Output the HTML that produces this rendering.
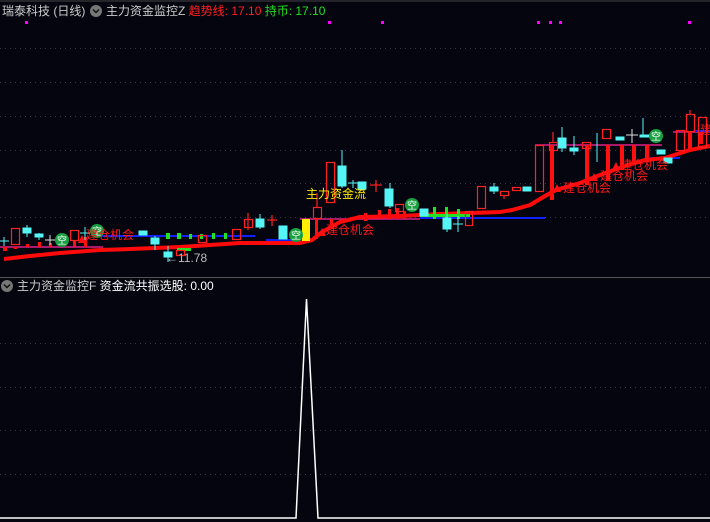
<!DOCTYPE html>
<html><head><meta charset="utf-8"><style>
html,body{margin:0;padding:0;background:#05050f;}
body{width:710px;height:522px;overflow:hidden;position:relative;font-family:"Liberation Sans","Noto Sans CJK SC",sans-serif;}
.t{position:absolute;font-size:12px;white-space:nowrap;line-height:14px;}
</style></head><body>
<svg width="710" height="522" style="position:absolute;left:0;top:0" xmlns="http://www.w3.org/2000/svg">
<g stroke="#3a3a44" stroke-dasharray="1,4" stroke-width="1">
<line x1="0" y1="48.5" x2="710" y2="48.5"/><line x1="0" y1="82.5" x2="710" y2="82.5"/>
<line x1="0" y1="116.5" x2="710" y2="116.5"/><line x1="0" y1="150.5" x2="710" y2="150.5"/>
<line x1="0" y1="183.5" x2="710" y2="183.5"/><line x1="0" y1="217.5" x2="710" y2="217.5"/>
<line x1="0" y1="343.5" x2="710" y2="343.5"/><line x1="0" y1="387.5" x2="710" y2="387.5"/>
<line x1="0" y1="430.5" x2="710" y2="430.5"/><line x1="0" y1="474.5" x2="710" y2="474.5"/>
</g>
<line x1="0" y1="277.5" x2="710" y2="277.5" stroke="#555"/>
<line x1="0" y1="1" x2="710" y2="1" stroke="#444"/>
<g fill="#ff00ff"><rect x="25" y="21" width="3" height="3"/><rect x="328" y="21" width="3" height="3"/><rect x="381" y="21" width="3" height="3"/><rect x="537" y="21" width="3" height="3"/><rect x="549" y="21" width="3" height="3"/><rect x="559" y="21" width="3" height="3"/><rect x="688" y="21" width="3" height="3"/></g>
<g stroke="#e0208a" stroke-width="1.5"><line x1="0" y1="247" x2="103" y2="247"/><line x1="300" y1="219" x2="420" y2="219"/><line x1="406" y1="216" x2="430" y2="216"/><line x1="535" y1="145" x2="662" y2="145"/><line x1="673" y1="132" x2="710" y2="132"/></g>
<g stroke="#1020ff" stroke-width="2"><line x1="101" y1="236" x2="255" y2="236"/><line x1="266" y1="240" x2="312" y2="240"/><line x1="420" y1="218" x2="545" y2="218"/><line x1="650" y1="158" x2="680" y2="158"/><line x1="695" y1="131" x2="710" y2="131"/></g>
<g fill="#ff1010"><rect x="3" y="247" width="4" height="4"/><rect x="14" y="247" width="3" height="2"/><rect x="26" y="244" width="3" height="3"/><rect x="38" y="242" width="3" height="5"/><rect x="49" y="243" width="3" height="4"/><rect x="73" y="240" width="3" height="7"/><rect x="84" y="237" width="3" height="10"/>
<rect x="315" y="219" width="3" height="20"/><rect x="330" y="219" width="3" height="6"/><rect x="364" y="213" width="3" height="8"/><rect x="378" y="210" width="3" height="9"/><rect x="388" y="209" width="3" height="10"/><rect x="396" y="208" width="3" height="11"/><rect x="403" y="211" width="3" height="8"/>
<rect x="550" y="145" width="4" height="55"/><rect x="585" y="145" width="4" height="40"/><rect x="606" y="145" width="4" height="35"/><rect x="620" y="145" width="4" height="25"/><rect x="632" y="145" width="4" height="20"/><rect x="645" y="145" width="4" height="15"/><rect x="688" y="132" width="4" height="18"/><rect x="699" y="132" width="4" height="12"/></g>
<polyline fill="none" stroke="#ff0a0a" stroke-width="4" points="4,259 30,256 60,253 100,250 130,249 180,247 240,243 300,243 312,240 322,232 340,222 360,217 400,216 440,214 470,213 500,212 512,210 530,205 545,196 556,190 580,183 600,175 625,166 645,160 665,158 690,150 710,146"/>
<g fill="#22e022"><rect x="166" y="233" width="4" height="6"/><rect x="177" y="233" width="4" height="6"/><rect x="189" y="234" width="3" height="5"/><rect x="200" y="234" width="3" height="5"/><rect x="212" y="233" width="3" height="6"/><rect x="224" y="233" width="3" height="6"/><rect x="177" y="248" width="14" height="3"/>
<rect x="433" y="207" width="3" height="12"/><rect x="445" y="207" width="3" height="12"/><rect x="457" y="209" width="3" height="10"/><rect x="420" y="214" width="50" height="3"/></g>
<g stroke="#55f5f5" fill="#55f5f5"><line x1="4" y1="237" x2="4" y2="246"/><line x1="0" y1="241" x2="9" y2="241"/>
<line x1="27" y1="225" x2="27" y2="237"/><rect x="23" y="228" width="8" height="5"/><rect x="35" y="234" width="8" height="3"/><line x1="39" y1="233" x2="39" y2="240"/>
<line x1="85" y1="227" x2="85" y2="240"/><line x1="80" y1="233" x2="90" y2="233"/>
<rect x="139" y="231" width="8" height="4"/><rect x="151" y="238" width="8" height="6"/><line x1="155" y1="236" x2="155" y2="250"/><rect x="164" y="252" width="8" height="5"/><line x1="168" y1="246" x2="168" y2="262"/>
<rect x="256" y="219" width="8" height="8"/><line x1="260" y1="214" x2="260" y2="229"/><rect x="279" y="226" width="8" height="13"/>
<line x1="342" y1="150" x2="342" y2="188"/><rect x="338" y="166" width="8" height="20"/><line x1="348" y1="183" x2="358" y2="183"/><line x1="353" y1="180" x2="353" y2="188"/><rect x="358" y="182" width="8" height="7"/><line x1="390" y1="183" x2="390" y2="208"/><rect x="385" y="189" width="8" height="17"/>
<rect x="420" y="209" width="8" height="7"/><rect x="443" y="218" width="8" height="11"/><line x1="447" y1="214" x2="447" y2="232"/><line x1="458" y1="216" x2="458" y2="232"/><line x1="453" y1="224" x2="463" y2="224"/>
<rect x="490" y="187" width="8" height="4"/><line x1="494" y1="183" x2="494" y2="194"/><rect x="523" y="187" width="8" height="4"/>
<line x1="562" y1="127" x2="562" y2="152"/><rect x="558" y="138" width="8" height="10"/><rect x="570" y="148" width="8" height="3"/><line x1="574" y1="136" x2="574" y2="155"/><line x1="597" y1="133" x2="597" y2="162"/>
<rect x="616" y="137" width="8" height="3"/><line x1="643" y1="118" x2="643" y2="137"/><rect x="640" y="135" width="9" height="2"/><rect x="657" y="150" width="8" height="4"/><rect x="664" y="158" width="8" height="5"/></g>
<g stroke="#ddd"><line x1="50" y1="235" x2="50" y2="245"/><line x1="45" y1="240" x2="55" y2="240"/><line x1="632" y1="129" x2="632" y2="143"/><line x1="626" y1="135" x2="638" y2="135"/></g>
<g stroke="#ff2020" fill="none" stroke-width="1.2"><rect x="11.5" y="228.5" width="8" height="16"/><rect x="70.5" y="230.5" width="8" height="10"/>
<rect x="176.5" y="250.5" width="8" height="5"/><rect x="198.5" y="235.5" width="8" height="7"/><rect x="232.5" y="229.5" width="8" height="10"/><rect x="244.5" y="219.5" width="8" height="8"/><line x1="248" y1="213" x2="248" y2="230"/><line x1="267" y1="220" x2="277" y2="220"/><line x1="272" y1="215" x2="272" y2="226"/>
<rect x="313.5" y="207.5" width="8" height="11"/><line x1="317" y1="193" x2="317" y2="207"/><rect x="326.5" y="162.5" width="8" height="40"/><line x1="370" y1="185" x2="382" y2="185"/><line x1="376" y1="180" x2="376" y2="192"/><rect x="395.5" y="204.5" width="8" height="7"/><rect x="465.5" y="211.5" width="7" height="14"/>
<rect x="477.5" y="186.5" width="8" height="22"/><rect x="500.5" y="191.5" width="8" height="4"/><line x1="504" y1="195" x2="504" y2="199"/><rect x="512.5" y="187.5" width="8" height="3"/><rect x="535.5" y="145.5" width="8" height="46"/><rect x="549.5" y="142.5" width="8" height="8"/><line x1="553" y1="132" x2="553" y2="142"/><rect x="582.5" y="142.5" width="8" height="6"/><rect x="602.5" y="129.5" width="8" height="9"/><rect x="676.5" y="130.5" width="8" height="20"/><rect x="686.5" y="114.5" width="8" height="17"/><line x1="690" y1="110" x2="690" y2="114"/><rect x="698.5" y="117.5" width="8" height="30"/></g>
<rect x="302" y="219" width="8" height="22" fill="#ffee00"/>
<g fill="#ff1010"><polygon points="78,243 82,235 86,243"/><polygon points="318,236 322,228 326,236"/><polygon points="553,192 557,184 561,192"/><polygon points="590,181 594,173 598,181"/><polygon points="612,170 616,162 620,170"/></g>
<g font-family="Noto Sans CJK SC,sans-serif" font-size="10" fill="#fff" text-anchor="middle">
<circle cx="62" cy="240" r="7" fill="#18a040"/><text x="62" y="244">空</text>
<circle cx="97" cy="231" r="7" fill="#18a040"/><text x="97" y="235">空</text>
<circle cx="296" cy="235" r="7" fill="#18a040"/><text x="296" y="239">空</text>
<circle cx="412" cy="205" r="7" fill="#18a040"/><text x="412" y="209">空</text>
<circle cx="656" cy="136" r="7" fill="#18a040"/><text x="656" y="140">空</text></g>
<g font-family="Noto Sans CJK SC,sans-serif" font-size="12" fill="#ff1818">
<text x="86" y="239">建仓机会</text><text x="326" y="234">建仓机会</text><text x="563" y="192">建仓机会</text><text x="600" y="180">建仓机会</text><text x="620" y="169">建仓机会</text><text x="700" y="134">建</text></g>
<text x="306" y="198" font-family="Noto Sans CJK SC,sans-serif" font-size="12" fill="#ffee00">主力资金流</text>
<text x="166" y="262" font-family="Liberation Sans,sans-serif" font-size="12" fill="#bbb">←11.78</text>
<polyline fill="none" stroke="#fff" stroke-width="1.5" points="0,518 296,518 306.5,299 318,518 710,518"/>
<circle cx="96" cy="11" r="6" fill="#777"/><path d="M93 9.5 L96 12.5 L99 9.5" stroke="#111" stroke-width="1.5" fill="none"/>
<circle cx="7" cy="286" r="6" fill="#777"/><path d="M4 284.5 L7 287.5 L10 284.5" stroke="#111" stroke-width="1.5" fill="none"/>
</svg>
<div class="t" style="left:2px;top:4px;color:#ccc">瑞泰科技 (日线)</div>
<div class="t" style="left:106px;top:4px;color:#ccc">主力资金监控Z <span style="color:#ff2020">趋势线: 17.10</span> <span style="color:#20e020">持币: 17.10</span></div>
<div class="t" style="left:17px;top:279px;color:#ccc">主力资金监控F <span style="color:#fff">资金流共振选股: 0.00</span></div>
</body></html>
